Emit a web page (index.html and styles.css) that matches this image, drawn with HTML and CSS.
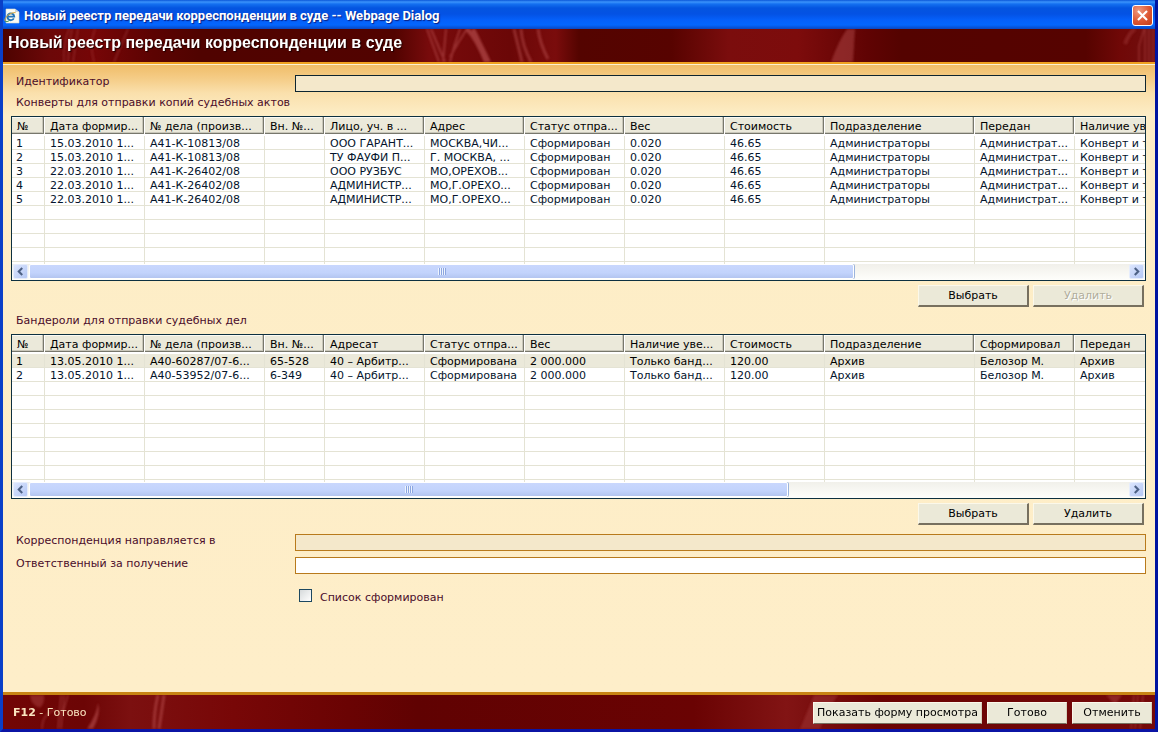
FILE: index.html
```html
<!DOCTYPE html>
<html lang="ru">
<head>
<meta charset="utf-8">
<title>Новый реестр передачи корреспонденции в суде</title>
<link rel="stylesheet" href="styles.css">
</head>
<body>
<div class="window">
  <div class="titlebar">
    <svg class="app-icon" viewBox="0 0 16 16" aria-hidden="true">
      <path d="M2 1h9l4 3v11H2z" fill="#fbfbf4" stroke="#d8dccb" stroke-width=".6"/>
      <path d="M11 1v3h4z" fill="#c9d3dc"/>
      <path d="M9.8 10.4A3.4 3.4 0 1 1 10.2 8.6H4.2" fill="none" stroke="#2374b8" stroke-width="1.9"/>
      <path d="M1.2 13.2C-.4 10.6 5 4.2 11.6 4.6" fill="none" stroke="#d9a83a" stroke-width="1"/>
      <path d="M1.2 13.2C2 14.2 4 13.4 5.4 12.6" fill="none" stroke="#3f9350" stroke-width="1"/>
    </svg>
    <span class="titlebar-text">Новый реестр передачи корреспонденции в суде -- Webpage Dialog</span>
    <button class="close" type="button" aria-label="Закрыть">
      <svg viewBox="0 0 21 21" aria-hidden="true"><path d="M5.5 5.5l10 10M15.5 5.5l-10 10" stroke="#fff" stroke-width="2.3"/></svg>
    </button>
  </div>

  <header class="banner">
    <svg class="drape" viewBox="0 0 1152 33" preserveAspectRatio="none" aria-hidden="true">
      <defs>
        <filter id="soft" x="-20%" y="-20%" width="140%" height="140%"><feGaussianBlur stdDeviation="1"/></filter>
        <linearGradient id="cloth" x1="0" x2="1" y1="0" y2="0">
          <stop offset="0" stop-color="#4d0300"/><stop offset=".04" stop-color="#6c0808"/><stop offset=".08" stop-color="#760607"/><stop offset=".13" stop-color="#5c0302"/>
          <stop offset=".17" stop-color="#500300"/><stop offset=".34" stop-color="#520300"/><stop offset=".37" stop-color="#780b0c"/><stop offset=".44" stop-color="#6b0707"/>
          <stop offset=".48" stop-color="#7a0c0c"/><stop offset=".5" stop-color="#540400"/><stop offset=".58" stop-color="#570300"/><stop offset=".63" stop-color="#7b0d0d"/>
          <stop offset=".69" stop-color="#7d0c0c"/><stop offset=".75" stop-color="#600303"/><stop offset=".78" stop-color="#540300"/><stop offset=".94" stop-color="#560300"/><stop offset=".97" stop-color="#700807"/><stop offset="1" stop-color="#721010"/>
        </linearGradient>
      </defs>
      <rect width="1152" height="33" fill="url(#cloth)"/>
      <g filter="url(#soft)" fill="none" stroke="#b95050">
        <path d="M61 33Q60 14 66 0M65 33Q65 16 69 0M70 33L75 0" stroke-width="1" opacity=".6"/>
        <path d="M91 33Q86 14 92 0M125 0L111 33" stroke-width="2" opacity=".3"/>
        <path d="M424 0L436 33M428 0L442 33M443 0L440 33M457 0Q451 16 447 33M464 0Q456 12 447 28" stroke-width="2" opacity=".55"/>
        <path d="M464 0Q474 10 483 33M470 0L486 33" stroke-width="4" opacity=".65"/>
        <path d="M511 0L519 33M518 0Q519 16 528 33" stroke-width="3" opacity=".5"/>
        <path d="M535 0Q537 15 545 30" stroke-width="3" opacity=".5"/>
        <path d="M844 0Q836 11 828 33H850L852 0z" fill="#b95050" stroke="none" opacity=".45"/>
        <path d="M1136 33V17L1141 0M1142 33V0M1146 33V0M1150 33V0" stroke-width="1" opacity=".7"/>
        <path d="M1122 15Q1126 4 1132 0" stroke-width="4" opacity=".3"/>
      </g>
    </svg>
    <h1>Новый реестр передачи корреспонденции в суде</h1>
  </header>

  <main class="content">
    <div class="field">
      <label for="ident">Идентификатор</label>
      <input class="box box-dark" id="ident" type="text" readonly>
    </div>

    <section class="group">
      <h2>Конверты для отправки копий судебных актов</h2>
      <div class="grid">
        <div class="grid-view">
          <table>
            <colgroup><col class="c-num"><col class="c-mid"><col class="c-case"><col class="c-int"><col class="c-mid"><col class="c-mid"><col class="c-mid"><col class="c-mid"><col class="c-mid"><col class="c-dept"><col class="c-mid"><col class="c-mid"></colgroup>
            <thead>
              <tr><th>№</th><th>Дата формир...</th><th>№ дела (произв...</th><th>Вн. №...</th><th>Лицо, уч. в ...</th><th>Адрес</th><th>Статус отпра...</th><th>Вес</th><th>Стоимость</th><th>Подразделение</th><th>Передан</th><th>Наличие уве...</th></tr>
            </thead>
            <tbody>
              <tr><td>1</td><td>15.03.2010 1...</td><td>А41-К-10813/08</td><td></td><td>ООО ГАРАНТ...</td><td>МОСКВА,ЧИ...</td><td>Сформирован</td><td>0.020</td><td>46.65</td><td>Администраторы</td><td>Администрат...</td><td>Конверт и т...</td></tr>
              <tr><td>2</td><td>15.03.2010 1...</td><td>А41-К-10813/08</td><td></td><td>ТУ ФАУФИ П...</td><td>Г. МОСКВА, ...</td><td>Сформирован</td><td>0.020</td><td>46.65</td><td>Администраторы</td><td>Администрат...</td><td>Конверт и т...</td></tr>
              <tr><td>3</td><td>22.03.2010 1...</td><td>А41-К-26402/08</td><td></td><td>ООО РУЗБУС</td><td>МО,ОРЕХОВ...</td><td>Сформирован</td><td>0.020</td><td>46.65</td><td>Администраторы</td><td>Администрат...</td><td>Конверт и т...</td></tr>
              <tr><td>4</td><td>22.03.2010 1...</td><td>А41-К-26402/08</td><td></td><td>АДМИНИСТР...</td><td>МО,Г.ОРЕХО...</td><td>Сформирован</td><td>0.020</td><td>46.65</td><td>Администраторы</td><td>Администрат...</td><td>Конверт и т...</td></tr>
              <tr><td>5</td><td>22.03.2010 1...</td><td>А41-К-26402/08</td><td></td><td>АДМИНИСТР...</td><td>МО,Г.ОРЕХО...</td><td>Сформирован</td><td>0.020</td><td>46.65</td><td>Администраторы</td><td>Администрат...</td><td>Конверт и т...</td></tr>
              <tr><td><td><td><td><td><td><td><td><td><td><td><td></tr>
              <tr><td><td><td><td><td><td><td><td><td><td><td><td></tr>
              <tr><td><td><td><td><td><td><td><td><td><td><td><td></tr>
              <tr><td><td><td><td><td><td><td><td><td><td><td><td></tr>
              <tr><td><td><td><td><td><td><td><td><td><td><td><td></tr>
            </tbody>
          </table>
        </div>
        <div class="scrollbar">
          <button class="arrow" type="button" aria-label="Влево"><svg viewBox="0 0 15 15" aria-hidden="true"><path d="M9.5 3.500L5.500 7.500l4 4" fill="none" stroke="#4d6185" stroke-width="2.400"/></svg></button>
          <div class="track"><div class="thumb" style="width:75%"><i class="grip"></i></div></div>
          <button class="arrow" type="button" aria-label="Вправо"><svg viewBox="0 0 15 15" aria-hidden="true"><path d="M5.500 3.500l4 4-4 4" fill="none" stroke="#4d6185" stroke-width="2.400"/></svg></button>
        </div>
      </div>
      <div class="actions">
        <button class="btn" type="button">Выбрать</button>
        <button class="btn" type="button" disabled>Удалить</button>
      </div>
    </section>

    <section class="group">
      <h2>Бандероли для отправки судебных дел</h2>
      <div class="grid">
        <div class="grid-view">
          <table>
            <colgroup><col class="c-num"><col class="c-mid"><col class="c-case"><col class="c-int"><col class="c-mid"><col class="c-mid"><col class="c-mid"><col class="c-mid"><col class="c-mid"><col class="c-dept"><col class="c-mid"><col class="c-mid"></colgroup>
            <thead>
              <tr><th>№</th><th>Дата формир...</th><th>№ дела (произв...</th><th>Вн. №...</th><th>Адресат</th><th>Статус отпра...</th><th>Вес</th><th>Наличие уве...</th><th>Стоимость</th><th>Подразделение</th><th>Сформировал</th><th>Передан</th></tr>
            </thead>
            <tbody>
              <tr class="selected"><td>1</td><td>13.05.2010 1...</td><td>А40-60287/07-6...</td><td>65-528</td><td>40 – Арбитр...</td><td>Сформирована</td><td>2 000.000</td><td>Только банд...</td><td>120.00</td><td>Архив</td><td>Белозор М.</td><td>Архив</td></tr>
              <tr><td>2</td><td>13.05.2010 1...</td><td>А40-53952/07-6...</td><td>6-349</td><td>40 – Арбитр...</td><td>Сформирована</td><td>2 000.000</td><td>Только банд...</td><td>120.00</td><td>Архив</td><td>Белозор М.</td><td>Архив</td></tr>
              <tr><td><td><td><td><td><td><td><td><td><td><td><td></tr>
              <tr><td><td><td><td><td><td><td><td><td><td><td><td></tr>
              <tr><td><td><td><td><td><td><td><td><td><td><td><td></tr>
              <tr><td><td><td><td><td><td><td><td><td><td><td><td></tr>
              <tr><td><td><td><td><td><td><td><td><td><td><td><td></tr>
              <tr><td><td><td><td><td><td><td><td><td><td><td><td></tr>
              <tr><td><td><td><td><td><td><td><td><td><td><td><td></tr>
              <tr><td><td><td><td><td><td><td><td><td><td><td><td></tr>
            </tbody>
          </table>
        </div>
        <div class="scrollbar">
          <button class="arrow" type="button" aria-label="Влево"><svg viewBox="0 0 15 15" aria-hidden="true"><path d="M9.500 3.500L5.500 7.500l4 4" fill="none" stroke="#4d6185" stroke-width="2.400"/></svg></button>
          <div class="track"><div class="thumb" style="width:69%"><i class="grip"></i></div></div>
          <button class="arrow" type="button" aria-label="Вправо"><svg viewBox="0 0 15 15" aria-hidden="true"><path d="M5.500 3.500l4 4-4 4" fill="none" stroke="#4d6185" stroke-width="2.400"/></svg></button>
        </div>
      </div>
      <div class="actions">
        <button class="btn" type="button">Выбрать</button>
        <button class="btn" type="button">Удалить</button>
      </div>
    </section>

    <div class="fields">
      <div class="field">
        <label for="dest">Корреспонденция направляется в</label>
        <input class="box" id="dest" type="text" readonly>
      </div>
      <div class="field">
        <label for="resp">Ответственный за получение</label>
        <input class="box" id="resp" type="text">
      </div>
    </div>
    <label class="check"><input type="checkbox"><span>Список сформирован</span></label>
  </main>

  <footer class="footer">
    <svg class="drape" viewBox="0 0 1152 35" preserveAspectRatio="none" aria-hidden="true">
      <defs>
        <linearGradient id="cloth2" x1="0" x2="1" y1="0" y2="0">
          <stop offset="0" stop-color="#720606"/><stop offset=".07" stop-color="#6c0505"/><stop offset=".11" stop-color="#7c1010"/><stop offset=".2" stop-color="#780707"/>
          <stop offset=".3" stop-color="#6a0303"/><stop offset=".36" stop-color="#600202"/><stop offset=".6" stop-color="#6a0303"/><stop offset=".68" stop-color="#821414"/><stop offset=".76" stop-color="#6a0303"/><stop offset="1" stop-color="#740909"/>
        </linearGradient>
      </defs>
      <rect width="1152" height="35" fill="url(#cloth2)"/>
      <g filter="url(#soft)" fill="none" stroke="#b95050">
        <path d="M27 0H41Q42 9 37 13Q28 11 27 0z" fill="#b95050" stroke="none" opacity=".4"/>
        <path d="M58 0L55 35M61 0L58 35M65 0L60 18" stroke-width="1" opacity=".8"/>
        <path d="M52 15Q39 20 39 35" stroke-width="2" opacity=".4"/>
        <path d="M95 8Q94 20 84 35H90Q98 20 95 8z" fill="#b95050" stroke="none" opacity=".6"/>
        <path d="M155 0Q151 16 151 35M161 0L156 35" stroke-width="3" opacity=".55"/>
        <path d="M811 0H835Q823 18 817 35H797z" fill="#b95050" stroke="none" opacity=".3"/>
        <path d="M1103 0H1119L1112 10z" fill="#b95050" stroke="none" opacity=".4"/>
        <path d="M1131 0L1128 35M1135 0L1132 35M1140 0L1137 35" stroke-width="1" opacity=".7"/>
      </g>
    </svg>
    <div class="hint"><b>F12</b> - Готово</div>
    <div class="footer-actions">
      <button class="btn btn-flat btn-long" type="button">Показать форму просмотра</button>
      <button class="btn btn-flat" type="button">Готово</button>
      <button class="btn btn-flat" type="button">Отменить</button>
    </div>
  </footer>
</div>
</body>
</html>
```
FILE: styles.css
```css
* {
  box-sizing: border-box;
}

body {
  margin: 0;
  font: 11px/14px "DejaVu Sans", Verdana, sans-serif;
  color: #4a0c2a;
  background: #0a48d8;
}

button,
input {
  margin: 0;
  padding: 0;
  font: inherit;
}

.window {
  display: flex;
  flex-direction: column;
  min-height: 100vh;
  border: solid #0a3fc8;
  border-width: 0 3px 3px;
  border-right-color: #0014a0;
  border-bottom-color: #0b14a4;
}

/* Title bar */
.titlebar {
  display: flex;
  align-items: center;
  gap: 4px;
  height: 29px;
  padding: 2px 2px 0 1px;
  background: linear-gradient(#0a56d8 0, #3b93fb 2px, #1470f0 4px, #0455e0 8px, #0452e4 14px, #0560fa 20px, #0366fe 25px, #0a46c0 29px);
}

.app-icon {
  width: 16px;
  height: 16px;
}

.titlebar-text {
  flex: 1;
  font: bold 13px/16px Roboto, "Noto Sans", sans-serif;
  color: #fff;
  text-shadow: 1px 1px 1px #0a1e80;
}

.close {
  display: flex;
  width: 21px;
  height: 21px;
  border: 1px solid #fff;
  border-radius: 3px;
  background: radial-gradient(circle at 30% 25%, #ee9a80, #dd5632 55%, #c43c18);
}

.close svg {
  width: 100%;
}

/* Red banner and footer */
.banner,
.footer {
  position: relative;
  isolation: isolate;
}

.banner {
  height: 35px;
  padding: 4px 5px;
  border-bottom: 2px solid #f0a020;
}

.drape {
  position: absolute;
  inset: 0;
  z-index: -1;
  width: 100%;
  height: 100%;
}

.banner h1 {
  margin: 0;
  font: bold 16px/20px "Liberation Sans", Arial, sans-serif;
  color: #fff;
  text-shadow: 1px 1px 1px #200000;
}

.footer {
  display: flex;
  align-items: center;
  justify-content: space-between;
  height: 37px;
  padding: 2px 3px 0 10px;
  border-top: 3px solid #c88414;
}

.hint {
  color: #fbe6c0;
}

.footer-actions {
  display: flex;
  gap: 5px;
}

/* Form body */
.content {
  flex: 1;
  padding: 10px 9px 10px 8px;
  border-top: 1px solid #fdf0d0;
  background: linear-gradient(#f0bd69 0, #f5cd88 14px, #fae0ac 28px, #fdedc6 50px, #feeec9 100%);
}

.field {
  display: grid;
  grid-template-columns: 279px 1fr;
  padding-left: 5px;
}

.fields {
  display: grid;
  gap: 6px;
  margin-top: 9px;
}

.box {
  width: 100%;
  height: 17px;
  border: 1px solid #b87a1c;
  background: #fff;
}

.box:read-only {
  background: #f4e8cb;
}

.box-dark {
  border-color: #0d2530;
}

.check {
  display: flex;
  width: fit-content;
  gap: 8px;
  margin: 15px 0 0 288px;
}

.check span {
  padding-top: 2px;
}

.check input {
  appearance: none;
  width: 13px;
  height: 13px;
  border: 1px solid #1d4860;
  background: linear-gradient(135deg, #d6dadb, #fff);
}

.group {
  margin-top: 7px;
}

.field + .group {
  margin-top: 4px;
}

.group h2 {
  margin: 0 5px 6px;
  font: inherit;
}

/* Record grids */
.grid {
  border: 1px solid #0d3040;
  background: #fff;
}

.grid-view {
  height: 147px;
  overflow: hidden;
}

table {
  width: 1163px;
  table-layout: fixed;
  border-collapse: separate;
  border-spacing: 0;
  color: #04142c;
}

.c-num {
  width: 33px;
}

.c-mid {
  width: 100px;
}

.c-case {
  width: 120px;
}

.c-int {
  width: 60px;
}

.c-dept {
  width: 150px;
}

th,
td {
  overflow: hidden;
  padding: 2px 0 0 5px;
  font-weight: normal;
  text-align: left;
  white-space: nowrap;
}

th {
  height: 19px;
  border: solid #fff;
  border-width: 0 1px 2px 0;
  background: #ebe9da;
  box-shadow: inset -1px -1px #77776c, inset -2px -2px #c9c7ba, inset 0 1px #fbfaf4;
  color: #000;
}

td {
  height: 14px;
  border: solid #e4e3d4;
  border-width: 0 1px 1px 0;
  line-height: 11px;
}

td:first-child {
  padding-left: 4px;
}

.selected td {
  background: #ebe9da;
  color: #000;
}

.scrollbar {
  display: flex;
  height: 16px;
  padding: 0 1px 1px;
  background: linear-gradient(#f1f0ea, #fefefb);
}

.arrow {
  display: flex;
  width: 15px;
  height: 15px;
  border: 1px solid #e6edfc;
  border-radius: 2px;
  background: linear-gradient(135deg, #dbe5fd, #b5c8f5);
}

.arrow svg {
  width: 100%;
}

.track {
  flex: 1;
  padding-left: 1px;
}

.thumb {
  display: flex;
  align-items: center;
  justify-content: center;
  height: 15px;
  border: 1px solid #fff;
  border-radius: 2px;
  background: linear-gradient(#c9d7fd, #c2d3fc 60%, #b3c5f0);
  box-shadow: 1px 0 #9cb4dc;
}

.grip {
  width: 8px;
  height: 7px;
  background: repeating-linear-gradient(90deg, #eef4fe 0 1px, #8ca6e0 1px 2px);
}

/* Buttons */
.btn {
  width: 111px;
  height: 22px;
  border: solid #fbf8ea;
  border-width: 1px 2px 2px 1px;
  border-right-color: #77705f;
  border-bottom-color: #77705f;
  background: #ebe9d8;
  color: #000;
}

.btn:disabled {
  color: #b0ad9c;
  text-shadow: 1px 1px #fff;
}

.actions {
  display: flex;
  justify-content: flex-end;
  gap: 4px;
  margin-top: 4px;
  padding-right: 2px;
}

.btn-flat {
  width: 80px;
  border-width: 1px;
  border-right-color: #d5d0bc;
}

.btn-long {
  width: 169px;
}
```
